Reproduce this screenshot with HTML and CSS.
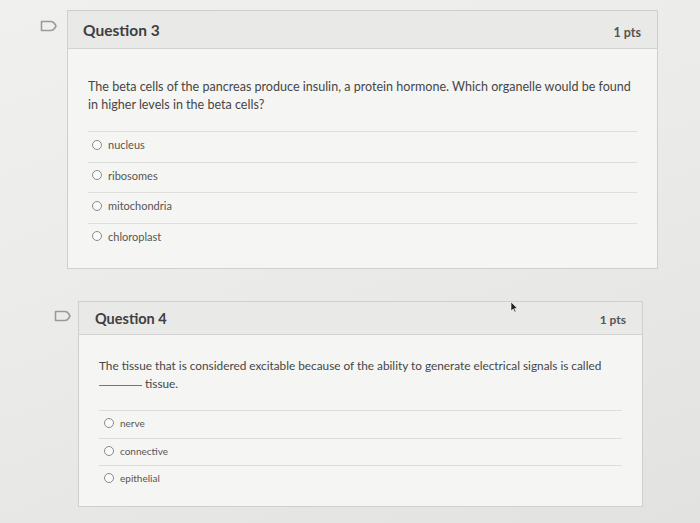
FILE: index.html
```
<!DOCTYPE html>
<html>
<head>
<meta charset="utf-8">
<link rel="stylesheet" href="styles.css">
</head>
<body>
<div class="page">
  <div class="question q3">
    <svg class="flag" width="18" height="12" viewBox="0 0 18 12"><path d="M1.5 1.5 H11 Q13 1.5 14.5 3.5 L16 6 L14.5 8.5 Q13 10.5 11 10.5 H1.5 Z" fill="none" stroke="#9a9a9a" stroke-width="1.6" stroke-linejoin="round"/></svg>
    <div class="card">
      <div class="head">
        <span class="title">Question 3</span>
        <span class="pts">1 pts</span>
      </div>
      <div class="body">
        <p class="text">The beta cells of the pancreas produce insulin, a protein hormone. Which organelle would be found<br>in higher levels in the beta cells?</p>
        <ul class="answers">
          <li><span class="radio"></span>nucleus</li>
          <li><span class="radio"></span>ribosomes</li>
          <li><span class="radio"></span>mitochondria</li>
          <li><span class="radio"></span>chloroplast</li>
        </ul>
      </div>
    </div>
  </div>
  <div class="question q4">
    <svg class="flag" width="18" height="12" viewBox="0 0 18 12"><path d="M1.5 1.5 H11 Q13 1.5 14.5 3.5 L16 6 L14.5 8.5 Q13 10.5 11 10.5 H1.5 Z" fill="none" stroke="#9a9a9a" stroke-width="1.6" stroke-linejoin="round"/></svg>
    <div class="card">
      <div class="head">
        <span class="title">Question 4</span>
        <span class="pts">1 pts</span>
      </div>
      <div class="body">
        <p class="text">The tissue that is considered excitable because of the ability to generate electrical signals is called<br><span class="blank"></span> tissue.</p>
        <ul class="answers">
          <li><span class="radio"></span>nerve</li>
          <li><span class="radio"></span>connective</li>
          <li><span class="radio"></span>epithelial</li>
        </ul>
      </div>
    </div>
    <svg class="cursor" width="8" height="12" viewBox="0 0 8 12"><path d="M1 1 L1 10 L3.2 8 L4.8 11.2 L6 10.6 L4.5 7.5 L7.3 7.3 Z" fill="#222" stroke="#fff" stroke-width="0.6"/></svg>
  </div>
</div>
</body>
</html>
```
FILE: styles.css
```
* { box-sizing: border-box; }
html, body { margin: 0; padding: 0; }
body {
  width: 700px;
  height: 523px;
  overflow: hidden;
  font-family: Lato, "Open Sans", sans-serif;
  background: linear-gradient(160deg, #f0f0ee 0%, #ebebe9 45%, #e2e2e0 100%);
  color: #464646;
}
.page {
  padding-top: 10px;
  display: flex;
  flex-direction: column;
  gap: 32px;
}
.question {
  display: flex;
  align-items: flex-start;
  position: relative;
}
.flag { flex: none; margin-top: 10px; }
.q3 { padding-left: 40px; }
.q3 .flag { margin-right: 9px; }
.q3 .card { width: 591px; }
.q4 { padding-left: 54px; }
.q4 .flag { margin-right: 6px; margin-top: 9px; }
.q4 .card { width: 565px; }

.card {
  background: #f5f5f3;
  border: 1px solid #cfcfcd;
}
.head {
  display: flex;
  justify-content: space-between;
  align-items: center;
  background: #e9e9e7;
  border-bottom: 1px solid #d2d2d0;
  padding: 0 16px 0 15px;
}
.q3 .head { height: 38px; }
.q4 .head { height: 33px; padding: 0 16px 0 16px; }
.title { font-weight: 700; font-size: 15.5px; color: #3f3f3f; }
.q4 .title { font-size: 14.5px; }
.pts { font-weight: 700; font-size: 12.5px; color: #555; padding-top: 5px; }
.q4 .pts { font-size: 12px; padding-top: 2px; }

.body { padding: 0 20px; }
.text { margin: 0; line-height: 18px; }
.q3 .text { font-size: 12.55px; padding-top: 29px; margin-bottom: 17px; }
.q4 .text { font-size: 11.8px; padding-top: 22px; margin-bottom: 17px; }
.blank {
  display: inline-block;
  width: 43px;
  border-bottom: 1px solid #777;
  vertical-align: 2px;
}
.answers { list-style: none; margin: 0; padding: 0; }
.answers li {
  display: flex;
  align-items: center;
  border-top: 1px solid #dededc;
  color: #555;
}
.q3 .answers li { height: 30.5px; font-size: 11px; padding-left: 4px; padding-bottom: 4px; }
.q4 .answers li { height: 27.5px; font-size: 10px; padding-left: 5px; padding-bottom: 2px; }
.q3 .answers { padding-bottom: 15px; }
.q4 .answers { padding-bottom: 13px; }
.radio {
  width: 10px;
  height: 10px;
  border: 1px solid #8a8a8a;
  border-radius: 50%;
  margin-right: 6px;
  flex: none;
  background: #fbfbfa;
}
.cursor { position: absolute; left: 510px; top: 0px; }
```
